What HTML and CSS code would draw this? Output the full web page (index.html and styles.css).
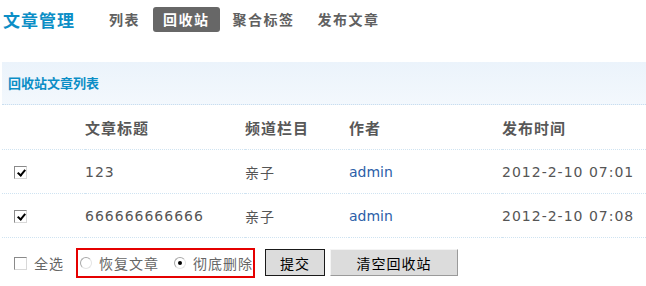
FILE: index.html
```html
<!DOCTYPE html>
<html lang="zh-CN">
<head>
    <meta charset="UTF-8">
    <title>回收站</title>
    <link rel="stylesheet" href="styles.css">
</head>
<body>
    <div class="topbar">
        <span class="brand">文章管理</span>
        <a class="tab" href="#">列表</a>
        <a class="tab on" href="#">回收站</a>
        <a class="tab" href="#">聚合标签</a>
        <a class="tab" href="#">发布文章</a>
    </div>

    <div class="panel">
        <div class="panel-head">回收站文章列表</div>
        <table class="list">
            <colgroup>
                <col class="c-check">
                <col class="c-title">
                <col class="c-chan">
                <col class="c-author">
                <col>
            </colgroup>
            <tr class="head">
                <td></td>
                <td>文章标题</td>
                <td>频道栏目</td>
                <td>作者</td>
                <td>发布时间</td>
            </tr>
            <tr>
                <td><input type="checkbox" class="chk" checked></td>
                <td>123</td>
                <td>亲子</td>
                <td><a class="user" href="#">admin</a></td>
                <td>2012-2-10 07:01</td>
            </tr>
            <tr>
                <td><input type="checkbox" class="chk" checked></td>
                <td>666666666666</td>
                <td>亲子</td>
                <td><a class="user" href="#">admin</a></td>
                <td>2012-2-10 07:08</td>
            </tr>
        </table>

        <div class="actions">
            <label class="opt"><input type="checkbox" class="chk">全选</label>
            <div class="mode">
                <label class="opt"><input type="radio" name="mode" class="rad">恢复文章</label>
                <label class="opt"><input type="radio" name="mode" class="rad" checked>彻底删除</label>
            </div>
            <button class="btn main">提交</button>
            <button class="btn">清空回收站</button>
        </div>
    </div>
</body>
</html>
```

FILE: styles.css
```css
body {
    margin: 0;
    font-family: "DejaVu Sans", "Noto Sans CJK SC", sans-serif;
    font-size: 14px;
    color: #555;
    background: #fff;
}

a {
    text-decoration: none;
}

.topbar {
    display: flex;
    align-items: center;
    height: 25px;
    padding: 7px 0 0 3px;
}

.brand {
    font-family: "Noto Sans CJK SC", sans-serif;
    font-size: 17px;
    letter-spacing: 1px;
    font-weight: bold;
    color: #0b8ec6;
    margin-right: 24px;
}

.tab {
    font-family: "Noto Sans CJK SC", sans-serif;
    font-weight: bold;
    letter-spacing: 1.5px;
    color: #606060;
    height: 25px;
    line-height: 25px;
    padding: 0 10px;
    margin-right: 3px;
    border-radius: 3px;
}

.tab.on {
    background-color: #676767;
    color: #fff;
}

.panel {
    margin: 30px 0 0 2px;
}

.panel-head {
    height: 42px;
    line-height: 42px;
    padding-left: 6px;
    font-family: "Noto Sans CJK SC", sans-serif;
    font-size: 13px;
    font-weight: bold;
    color: #0b8ec6;
    background: linear-gradient(#ebf3fb, #f3f8fd);
    border-bottom: 1px dotted #c9deef;
}

.list {
    width: 100%;
    border-collapse: collapse;
    table-layout: fixed;
    letter-spacing: 1px;
}

.c-check { width: 83px; }
.c-title { width: 160px; }
.c-chan { width: 104px; }
.c-author { width: 153px; }

.list td {
    height: 43px;
    padding: 0;
    border-bottom: 1px dotted #cfe3f1;
    white-space: nowrap;
}

.list tr.head td {
    height: 44px;
    font-family: "Noto Sans CJK SC", sans-serif;
    font-size: 15px;
    font-weight: bold;
    color: #585858;
}

.list td:first-child {
    padding-left: 12px;
}

.user {
    color: #2c5ea8;
    letter-spacing: 0;
}

.chk,
.rad {
    appearance: none;
    -webkit-appearance: none;
    position: relative;
    margin: 0;
    background: #fff;
    vertical-align: middle;
}

.chk {
    width: 13px;
    height: 13px;
    border: 1px solid #8a8a8a;
    border-right-color: #d8d8d8;
    border-bottom-color: #d8d8d8;
}

.chk:checked::after {
    content: "";
    position: absolute;
    left: 4px;
    top: 1px;
    width: 3px;
    height: 6px;
    border-right: 2px solid #000;
    border-bottom: 2px solid #000;
    transform: rotate(40deg);
}

.rad {
    width: 12px;
    height: 12px;
    border: 1px solid #a8a8a8;
    border-right-color: #e4e4e4;
    border-bottom-color: #e4e4e4;
    border-radius: 50%;
}

.rad:checked::after {
    content: "";
    position: absolute;
    left: 3px;
    top: 3px;
    width: 4px;
    height: 4px;
    border-radius: 50%;
    background: #000;
}

.actions {
    display: flex;
    align-items: flex-start;
    padding: 10px 0 0 12px;
}

.opt {
    display: flex;
    align-items: center;
    gap: 7px;
    height: 30px;
    font-family: "Noto Sans CJK SC", sans-serif;
    letter-spacing: 1px;
    color: #666;
    white-space: nowrap;
}

.mode {
    display: flex;
    gap: 15px;
    width: 173px;
    height: 26px;
    margin-left: 12px;
    padding-left: 2px;
    border: 2px solid #e50000;
    overflow: hidden;
}

.mode .opt {
    height: 26px;
}

.btn {
    height: 27px;
    margin-top: 1px;
    padding: 0;
    font-family: "Noto Sans CJK SC", sans-serif;
    font-size: 14px;
    letter-spacing: 1px;
    color: #000;
    background-color: #dcdcdc;
    border: 1px solid #9a9a9a;
    border-top-color: #f4f4f4;
    border-left-color: #f4f4f4;
}

.btn.main {
    width: 60px;
    margin-left: 10px;
    margin-right: 5px;
    border: 1px solid #1a1a1a;
}

.btn + .btn {
    width: 128px;
}
```
